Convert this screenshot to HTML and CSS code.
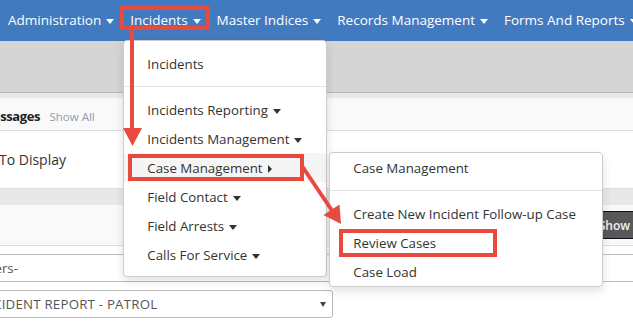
FILE: index.html
```html
<!DOCTYPE html>
<html lang="en">
	<head>
		<meta charset="UTF-8" />
		<meta name="viewport" content="width=device-width, initial-scale=1.0" />
		<title>Incidents</title>
		<link rel="stylesheet" href="styles.css">
	</head>

	<body>
		<nav class="topnav">
			<div class="nav-item">Administration<span class="caret"></span></div>
			<div class="nav-item">
				Incidents<span class="caret"></span>
				<div class="dropdown">
					<div class="dropdown-item">Incidents</div>
					<div class="divider"></div>
					<div class="dropdown-item">Incidents Reporting<span class="caret"></span></div>
					<div class="dropdown-item">Incidents Management<span class="caret"></span></div>
					<div class="dropdown-item active">
						Case Management<span class="caret-right"></span>
						<div class="dropdown submenu">
							<div class="dropdown-item">Case Management</div>
							<div class="divider"></div>
							<div class="dropdown-item">Create New Incident Follow-up Case</div>
							<div class="dropdown-item">Review Cases</div>
							<div class="dropdown-item">Case Load</div>
						</div>
					</div>
					<div class="dropdown-item">Field Contact<span class="caret"></span></div>
					<div class="dropdown-item">Field Arrests<span class="caret"></span></div>
					<div class="dropdown-item">Calls For Service<span class="caret"></span></div>
				</div>
			</div>
			<div class="nav-item">Master Indices<span class="caret"></span></div>
			<div class="nav-item">Records Management<span class="caret"></span></div>
			<div class="nav-item">Forms And Reports<span class="caret"></span></div>
		</nav>

		<div class="hero"></div>
		<div class="hero-foot"></div>

		<div class="panel-heading">
			<span class="msg-title">Messages</span>
			<span class="show-all">Show All</span>
		</div>
		<div class="panel-body">
			<div class="msg-empty">No Messages To Display</div>
		</div>

		<div class="band"></div>
		<div class="filter-bar">
			<button class="btn-show">Show</button>
		</div>

		<div class="form-row">
			<div class="select sel-officer">-Select Officers-<span class="sel-arrow"></span></div>
			<div class="select sel-wide"></div>
		</div>
		<div class="form-row">
			<div class="select sel-report">INCIDENT REPORT - PATROL<span class="sel-arrow"></span></div>
		</div>

		<!-- annotations -->
		<svg class="marks" width="633" height="328" viewBox="0 0 633 328">
			<g fill="none" stroke="#e84a40" stroke-width="4">
				<rect x="122" y="8" width="86" height="20" />
				<rect x="130" y="156" width="172" height="23" />
				<rect x="341" y="231" width="154" height="24" />
				<line x1="132" y1="30" x2="132" y2="130" />
				<line x1="302" y1="166" x2="333" y2="212" />
			</g>
			<g fill="#e84a40">
				<polygon points="123,128 142,128 132.5,146" />
				<polygon points="323.5,215 339.5,204.5 341,224" />
			</g>
		</svg>
	</body>
</html>
```
FILE: styles.css
```css
* {
	box-sizing: border-box;
	margin: 0;
	padding: 0;
}

html,
body {
	width: 633px;
	height: 328px;
	overflow: hidden;
}

body {
	font-family: "Open Sans", "Noto Sans", sans-serif;
	font-size: 13.3px;
	color: #333;
	background: #fff;
}

.topnav {
	display: flex;
	height: 41px;
	background: #427ac0;
	white-space: nowrap;
}

.nav-item {
	position: relative;
	flex-shrink: 0;
	padding: 0 8px;
	line-height: 41px;
	font-size: 13.5px;
	color: #fff;
}

.caret {
	display: inline-block;
	margin-left: 5px;
	border-top: 5px solid;
	border-left: 4px solid transparent;
	border-right: 4px solid transparent;
	vertical-align: middle;
}

.caret-right {
	display: inline-block;
	margin-left: 5px;
	border-left: 4px solid;
	border-top: 4px solid transparent;
	border-bottom: 4px solid transparent;
	vertical-align: middle;
}

.dropdown {
	position: absolute;
	top: 40px;
	left: 1px;
	z-index: 10;
	width: 204px;
	padding: 8px 0 7px;
	background: #fff;
	border: 1px solid #ccc;
	border-radius: 4px;
	box-shadow: 0 4px 10px rgba(0, 0, 0, 0.12);
	font-size: 13.3px;
	line-height: 20px;
	color: #333;
}

.dropdown-item {
	position: relative;
	padding: 5px 23px 4px;
	white-space: nowrap;
}

.dropdown-item.active {
	background: #f5f5f5;
}

.divider {
	height: 1px;
	margin: 8px 0;
	background: #e5e5e5;
}

.submenu {
	top: -1px;
	left: calc(100% + 3px);
	width: 274px;
	padding: 0;
}

.hero {
	height: 52px;
	background: #d5d5d5;
	border-bottom: 1px solid #b8b8b8;
}

.hero-foot {
	height: 5px;
	background: #e8e8e8;
}

.panel-heading {
	height: 33px;
	padding-top: 4px;
	line-height: 28px;
	background: #f9f9f9;
	border-bottom: 1px solid #ddd;
	white-space: nowrap;
}

.msg-title {
	display: inline-block;
	margin-left: -19px;
	font-size: 13px;
	font-weight: 700;
	letter-spacing: -0.4px;
	color: #222;
}

.show-all {
	margin-left: 6px;
	font-size: 11.5px;
	color: #8c9dab;
}

.panel-body {
	height: 57px;
	padding-top: 19px;
	line-height: 20px;
	font-size: 14px;
	white-space: nowrap;
}

.msg-empty {
	margin-left: -91px;
}

.band {
	height: 17px;
	background: #e8e8e8;
	border-top: 1px solid #ddd;
}

.filter-bar {
	display: flex;
	justify-content: flex-end;
	height: 41px;
	padding-top: 6px;
	margin-right: -6px;
	background: #f9f9f9;
	border-bottom: 1px solid #ddd;
}

.btn-show {
	height: 28px;
	padding: 0 8px;
	font-family: inherit;
	font-size: 12px;
	font-weight: 600;
	color: #f2f2f2;
	background: #58585a;
	border: 1px solid #111;
}

.form-row {
	display: flex;
	gap: 3px;
	margin-top: 8px;
}

.select {
	position: relative;
	flex-shrink: 0;
	height: 28px;
	padding: 0 12px;
	line-height: 26px;
	font-size: 13.3px;
	color: #555;
	background: #fff;
	border: 1px solid #bbb;
	border-radius: 3px;
	white-space: nowrap;
	overflow: hidden;
}

.sel-officer {
	width: 425px;
	margin-left: -92px;
}

.sel-wide {
	width: 320px;
}

.sel-report {
	width: 367px;
	margin-left: -34px;
	letter-spacing: 0.2px;
}

.sel-arrow {
	position: absolute;
	right: 6px;
	top: 11px;
	border-top: 5px solid #444;
	border-left: 3.5px solid transparent;
	border-right: 3.5px solid transparent;
}

.marks {
	position: absolute;
	top: 0;
	left: 0;
	z-index: 20;
	pointer-events: none;
}
```
